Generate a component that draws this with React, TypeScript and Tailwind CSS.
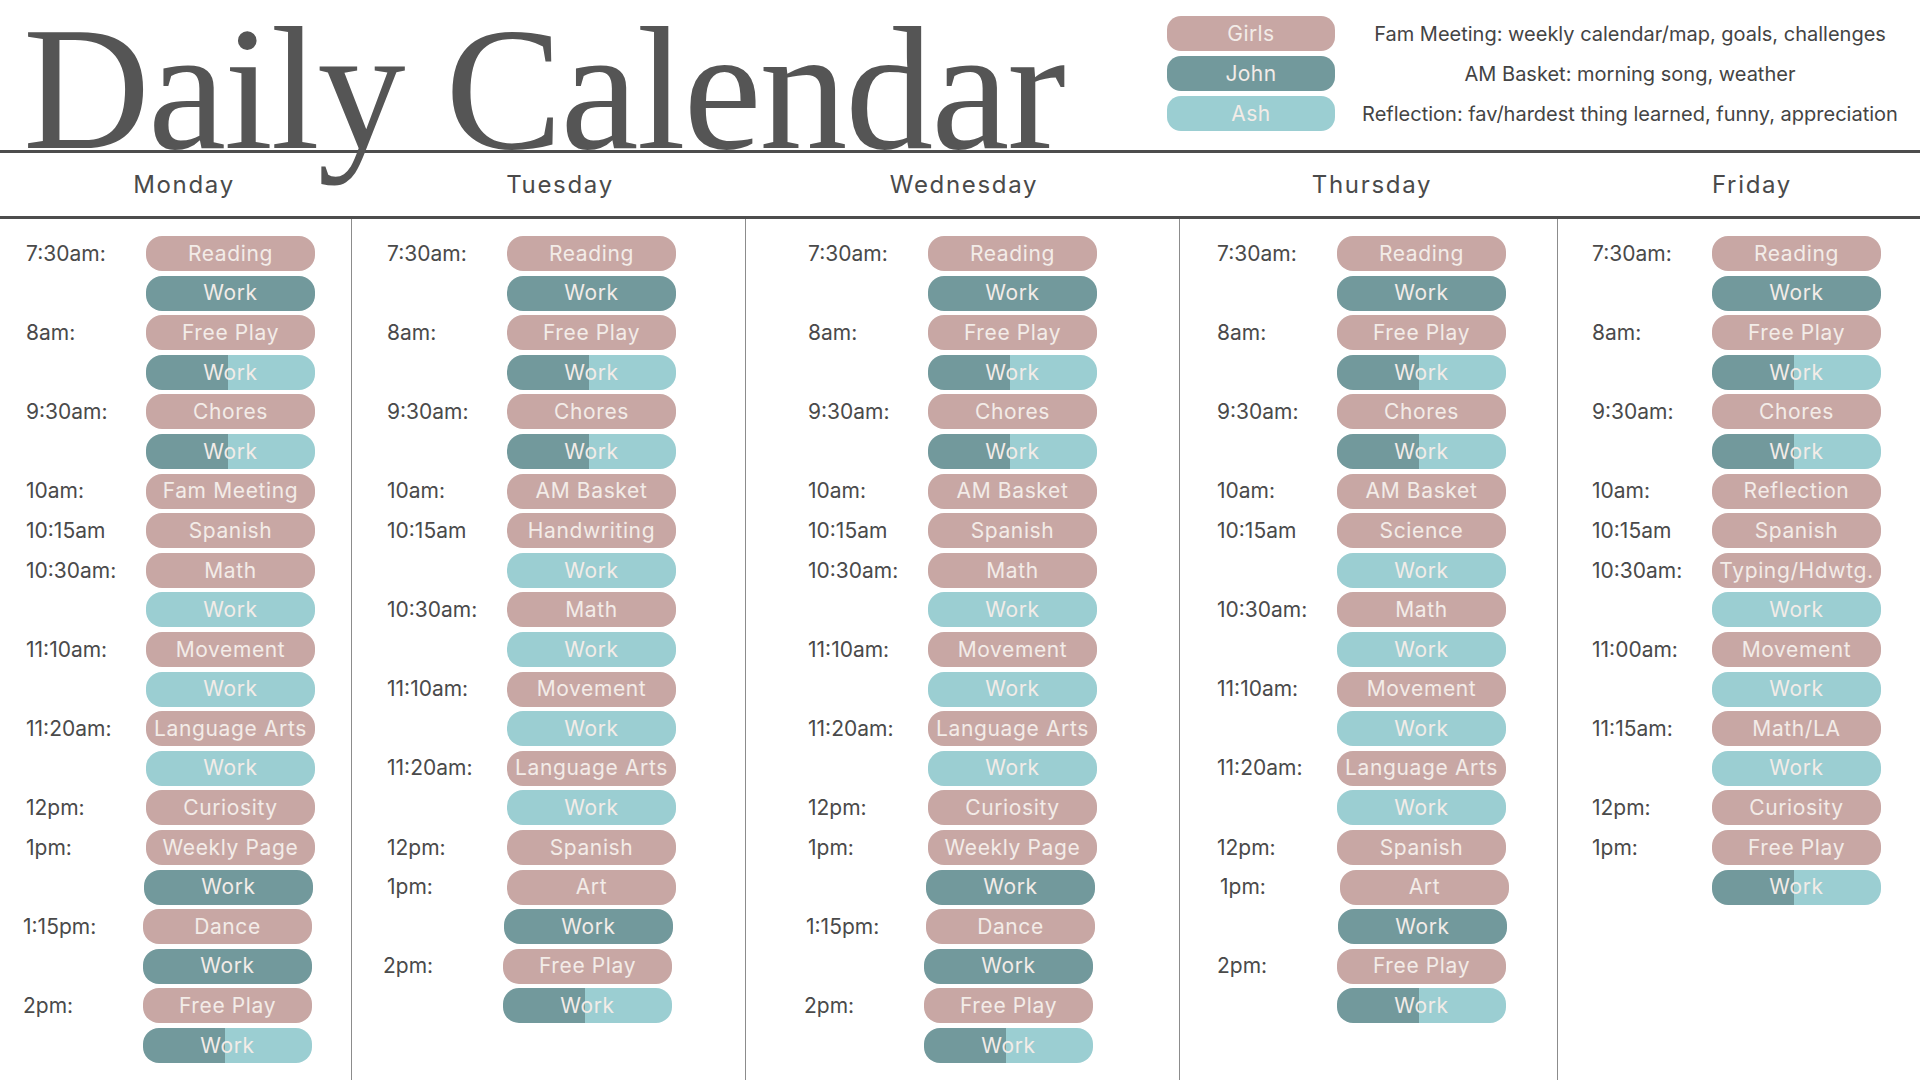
type Kind = 'g' | 'j' | 'a' | 's'
type Row = [string, string, Kind, string?]

const pillColors: Record<Kind, string> = {
  g: 'bg-[#c8a7a4]',
  j: 'bg-[#72999c]',
  a: 'bg-[#9bced2]',
  s: 'bg-[linear-gradient(to_right,#72999c_48.5%,#9bced2_48.5%)]',
}

// the printed sheet drifts a few px at the bottom of some columns
const L2 = 'ml-[-2px]'
const L3 = 'ml-[-3px]'
const L4 = 'ml-[-4px]'
const R1 = 'ml-[1px]'
const R3 = 'ml-[3px]'

const monday: Row[] = [
  ['7:30am:', 'Reading', 'g'],
  ['', 'Work', 'j'],
  ['8am:', 'Free Play', 'g'],
  ['', 'Work', 's'],
  ['9:30am:', 'Chores', 'g'],
  ['', 'Work', 's'],
  ['10am:', 'Fam Meeting', 'g'],
  ['10:15am', 'Spanish', 'g'],
  ['10:30am:', 'Math', 'g'],
  ['', 'Work', 'a'],
  ['11:10am:', 'Movement', 'g'],
  ['', 'Work', 'a'],
  ['11:20am:', 'Language Arts', 'g'],
  ['', 'Work', 'a'],
  ['12pm:', 'Curiosity', 'g'],
  ['1pm:', 'Weekly Page', 'g'],
  ['', 'Work', 'j', L2],
  ['1:15pm:', 'Dance', 'g', L3],
  ['', 'Work', 'j', L3],
  ['2pm:', 'Free Play', 'g', L3],
  ['', 'Work', 's', L3],
]

const tuesday: Row[] = [
  ['7:30am:', 'Reading', 'g'],
  ['', 'Work', 'j'],
  ['8am:', 'Free Play', 'g'],
  ['', 'Work', 's'],
  ['9:30am:', 'Chores', 'g'],
  ['', 'Work', 's'],
  ['10am:', 'AM Basket', 'g'],
  ['10:15am', 'Handwriting', 'g'],
  ['', 'Work', 'a'],
  ['10:30am:', 'Math', 'g'],
  ['', 'Work', 'a'],
  ['11:10am:', 'Movement', 'g'],
  ['', 'Work', 'a'],
  ['11:20am:', 'Language Arts', 'g'],
  ['', 'Work', 'a'],
  ['12pm:', 'Spanish', 'g'],
  ['1pm:', 'Art', 'g'],
  ['', 'Work', 'j', L3],
  ['2pm:', 'Free Play', 'g', L4],
  ['', 'Work', 's', L4],
]

const wednesday: Row[] = [
  ['7:30am:', 'Reading', 'g'],
  ['', 'Work', 'j'],
  ['8am:', 'Free Play', 'g'],
  ['', 'Work', 's'],
  ['9:30am:', 'Chores', 'g'],
  ['', 'Work', 's'],
  ['10am:', 'AM Basket', 'g'],
  ['10:15am', 'Spanish', 'g'],
  ['10:30am:', 'Math', 'g'],
  ['', 'Work', 'a'],
  ['11:10am:', 'Movement', 'g'],
  ['', 'Work', 'a'],
  ['11:20am:', 'Language Arts', 'g'],
  ['', 'Work', 'a'],
  ['12pm:', 'Curiosity', 'g'],
  ['1pm:', 'Weekly Page', 'g'],
  ['', 'Work', 'j', L2],
  ['1:15pm:', 'Dance', 'g', L2],
  ['', 'Work', 'j', L4],
  ['2pm:', 'Free Play', 'g', L4],
  ['', 'Work', 's', L4],
]

const thursday: Row[] = [
  ['7:30am:', 'Reading', 'g'],
  ['', 'Work', 'j'],
  ['8am:', 'Free Play', 'g'],
  ['', 'Work', 's'],
  ['9:30am:', 'Chores', 'g'],
  ['', 'Work', 's'],
  ['10am:', 'AM Basket', 'g'],
  ['10:15am', 'Science', 'g'],
  ['', 'Work', 'a'],
  ['10:30am:', 'Math', 'g'],
  ['', 'Work', 'a'],
  ['11:10am:', 'Movement', 'g'],
  ['', 'Work', 'a'],
  ['11:20am:', 'Language Arts', 'g'],
  ['', 'Work', 'a'],
  ['12pm:', 'Spanish', 'g'],
  ['1pm:', 'Art', 'g', R3],
  ['', 'Work', 'j', R1],
  ['2pm:', 'Free Play', 'g'],
  ['', 'Work', 's'],
]

const friday: Row[] = [
  ['7:30am:', 'Reading', 'g'],
  ['', 'Work', 'j'],
  ['8am:', 'Free Play', 'g'],
  ['', 'Work', 's'],
  ['9:30am:', 'Chores', 'g'],
  ['', 'Work', 's'],
  ['10am:', 'Reflection', 'g'],
  ['10:15am', 'Spanish', 'g'],
  ['10:30am:', 'Typing/Hdwtg.', 'g'],
  ['', 'Work', 'a'],
  ['11:00am:', 'Movement', 'g'],
  ['', 'Work', 'a'],
  ['11:15am:', 'Math/LA', 'g'],
  ['', 'Work', 'a'],
  ['12pm:', 'Curiosity', 'g'],
  ['1pm:', 'Free Play', 'g'],
  ['', 'Work', 's'],
]

// widths + paddings measured off the printout
const days = [
  { name: 'Monday', rows: monday, col: 'w-[351px] pl-[26px]', head: 'w-[351px] pl-[17px]' },
  { name: 'Tuesday', rows: tuesday, col: 'w-[394px] pl-[35px] border-l-[1.5px]', head: 'w-[394px] pl-[24px]' },
  { name: 'Wednesday', rows: wednesday, col: 'w-[434px] pl-[62px] border-l-[1.5px]', head: 'w-[434px] pl-[4px]' },
  { name: 'Thursday', rows: thursday, col: 'w-[378px] pl-[37px] border-l-[1.5px]', head: 'w-[378px] pl-[8px]' },
  { name: 'Friday', rows: friday, col: 'w-[363px] pl-[34px] border-l-[1.5px]', head: 'w-[363px] pl-[27px]' },
]

const legend = [
  { name: 'Girls', color: 'bg-[#c8a7a4]', note: 'Fam Meeting: weekly calendar/map, goals, challenges' },
  { name: 'John', color: 'bg-[#72999c]', note: 'AM Basket: morning song, weather' },
  { name: 'Ash', color: 'bg-[#9bced2]', note: 'Reflection: fav/hardest thing learned, funny, appreciation' },
]

function Pill({ label, kind }: { label: string; kind: Kind }) {
  return (
    <div
      className={`flex h-[35px] w-[169px] items-center justify-center whitespace-nowrap rounded-[16px] text-[21px] tracking-[0.03em] text-[#f3ece8] ${pillColors[kind]}`}
    >
      {label}
    </div>
  )
}

export default function App() {
  return (
    <div className="h-[1080px] w-[1920px] overflow-hidden bg-white font-['Inter','Liberation_Sans',sans-serif] text-[#4a4a4a]">
      <header className="flex h-[150px]">
        <div className="w-[1167px] pl-[23px]">
          <h1 className="relative z-10 mt-[1px] h-[146px] whitespace-nowrap font-['Liberation_Serif',serif] text-[176px] leading-none tracking-[-0.012em] text-[#555555]">
            Daily Calendar
          </h1>
        </div>
        <div className="flex flex-col gap-[5px] pt-[16px]">
          {legend.map((item) => (
            <div key={item.name} className="flex items-center">
              <div
                className={`flex h-[35px] w-[168px] items-center justify-center rounded-[14px] text-[21px] tracking-[0.02em] text-[#f3ece8] ${item.color}`}
              >
                {item.name}
              </div>
              <div className="ml-[10px] w-[570px] whitespace-nowrap text-center text-[20px] text-[#444444]">
                {item.note}
              </div>
            </div>
          ))}
        </div>
      </header>

      <div className="h-[3px] bg-[#4d4d4d]" />

      <div className="flex h-[63px] items-center">
        {days.map((day) => (
          <div key={day.name} className={`text-center text-[24px] tracking-[0.07em] ${day.head}`}>
            {day.name}
          </div>
        ))}
      </div>

      <div className="h-[3px] bg-[#4d4d4d]" />

      <main className="flex h-[861px]">
        {days.map((day) => (
          <div key={day.name} className={`flex flex-col gap-[4.6px] border-[#8c8c8c] pt-[17px] ${day.col}`}>
            {day.rows.map(([time, label, kind, shift], i) => (
              <div key={i} className={`flex items-center ${shift ?? ''}`}>
                <div className="w-[120px] whitespace-nowrap text-[21px]">{time}</div>
                <Pill label={label} kind={kind} />
              </div>
            ))}
          </div>
        ))}
      </main>
    </div>
  )
}
